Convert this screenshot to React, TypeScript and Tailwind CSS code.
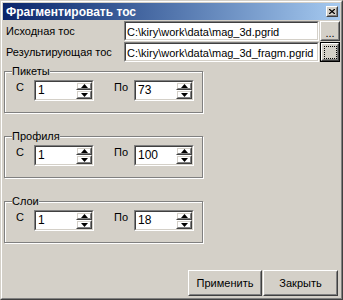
import type { ReactNode } from "react";

const font = "font-['Liberation_Sans',Arial,sans-serif]";

const Raised = ({ children, className = "" }: { children?: ReactNode; className?: string }) => (
  <div className={`border border-t-white border-l-white border-r-[#404040] border-b-[#404040] ${className}`}>
    <div className="h-full w-full border border-t-[#D4D0C8] border-l-[#D4D0C8] border-r-[#808080] border-b-[#808080] flex items-center justify-center">
      {children}
    </div>
  </div>
);

const Sunken = ({ children, className = "" }: { children?: ReactNode; className?: string }) => (
  <div className={`border border-t-[#808080] border-l-[#808080] border-r-white border-b-white ${className}`}>
    <div className="h-full w-full border border-t-[#404040] border-l-[#404040] border-r-[#D4D0C8] border-b-[#D4D0C8] bg-white flex overflow-hidden">
      {children}
    </div>
  </div>
);

const Arrow = ({ up }: { up?: boolean }) => (
  <svg width="7" height="4" viewBox="0 0 7 4">
    {up ? <polygon points="3.5,0 7,4 0,4" fill="#000" /> : <polygon points="0,0 7,0 3.5,4" fill="#000" />}
  </svg>
);

const SpinBox = ({ value }: { value: string }) => (
  <Sunken className="w-[60px] h-[21px]">
    <span className="flex-1 pl-[2px] pt-[1px] text-[12px] leading-[15px]">{value}</span>
    <div className="w-[16px] flex flex-col">
      <Raised className="h-[8px]">
        <Arrow up />
      </Raised>
      <Raised className="h-[9px]">
        <Arrow />
      </Raised>
    </div>
  </Sunken>
);

const GroupBox = ({ title, from, to, className = "" }: { title: string; from: string; to: string; className?: string }) => (
  <fieldset
    className={`ml-[1px] w-[199px] h-[48px] p-0 border border-[#808080] shadow-[inset_1px_1px_0_#fff,1px_1px_0_#fff] ${className}`}
  >
    <legend className="ml-[7px] px-0 leading-[13px] bg-[#D4D0C8]">{title}</legend>
    <div className="flex items-start pt-[2px]">
      <span className="ml-[11px] w-[18px] mt-[1px]">С</span>
      <SpinBox value={from} />
      <span className="ml-[20px] w-[20px] mt-[1px]">По</span>
      <SpinBox value={to} />
    </div>
  </fieldset>
);

const App = () => {
  return (
    <div className={`w-[343px] h-[300px] bg-[#D4D0C8] text-black text-[11px] leading-[13px] ${font}`}>
      <div className="h-full border border-t-[#D4D0C8] border-l-[#D4D0C8] border-r-[#404040] border-b-[#404040]">
        <div className="h-full border border-t-white border-l-white border-r-[#808080] border-b-[#808080] p-[1px] flex flex-col">
          <div className="h-[17px] bg-linear-to-r from-[#0A246A] to-[#A6CAF0] flex items-center justify-between pl-[3px] pr-[2px]">
            <span className="text-white font-bold text-[12px] leading-[14px]">Фрагментировать тос</span>
            <Raised className="w-[12px] h-[11px] bg-[#D4D0C8]">
              <svg width="6" height="5" viewBox="0 0 6 5">
                <path d="M0 0 L6 5 M6 0 L0 5" stroke="#000" strokeWidth="1.3" />
              </svg>
            </Raised>
          </div>

          <div className="mt-[1px] flex flex-col gap-[1px]">
            <div className="flex items-center h-[20px]">
              <span className="w-[121px] pl-[3px]">Исходная тос</span>
              <Sunken className="w-[195px] h-[20px]">
                <span className="pl-[1px] pt-[2px] text-[11px] leading-[14px] whitespace-nowrap">C:\kiry\work\data\mag_3d.pgrid</span>
              </Sunken>
              <Raised className="ml-[1px] w-[20px] h-[20px]">
                <span className="pt-[4px]">...</span>
              </Raised>
            </div>
            <div className="flex items-center h-[20px]">
              <span className="w-[121px] pl-[3px]">Результирующая тос</span>
              <Sunken className="w-[195px] h-[20px]">
                <span className="pl-[1px] pt-[2px] text-[11px] leading-[14px] whitespace-nowrap">C:\kiry\work\data\mag_3d_fragm.pgrid</span>
              </Sunken>
              <div className="ml-[1px] w-[20px] h-[20px] border border-black">
                <Raised className="h-full">
                  <div className="w-[13px] h-[13px] border border-dotted border-black" />
                </Raised>
              </div>
            </div>
          </div>

          <GroupBox title="Пикеты" from="1" to="73" className="mt-[3px]" />
          <GroupBox title="Профиля" from="1" to="100" className="mt-[17px]" />
          <GroupBox title="Слои" from="1" to="18" className="mt-[17px]" />

          <div className="mt-auto mb-[1px] flex justify-end pr-[2px]">
            <Raised className="w-[74px] h-[26px]">Применить</Raised>
            <Raised className="ml-[1px] w-[75px] h-[26px]">Закрыть</Raised>
          </div>
        </div>
      </div>
    </div>
  );
};

export default App;
